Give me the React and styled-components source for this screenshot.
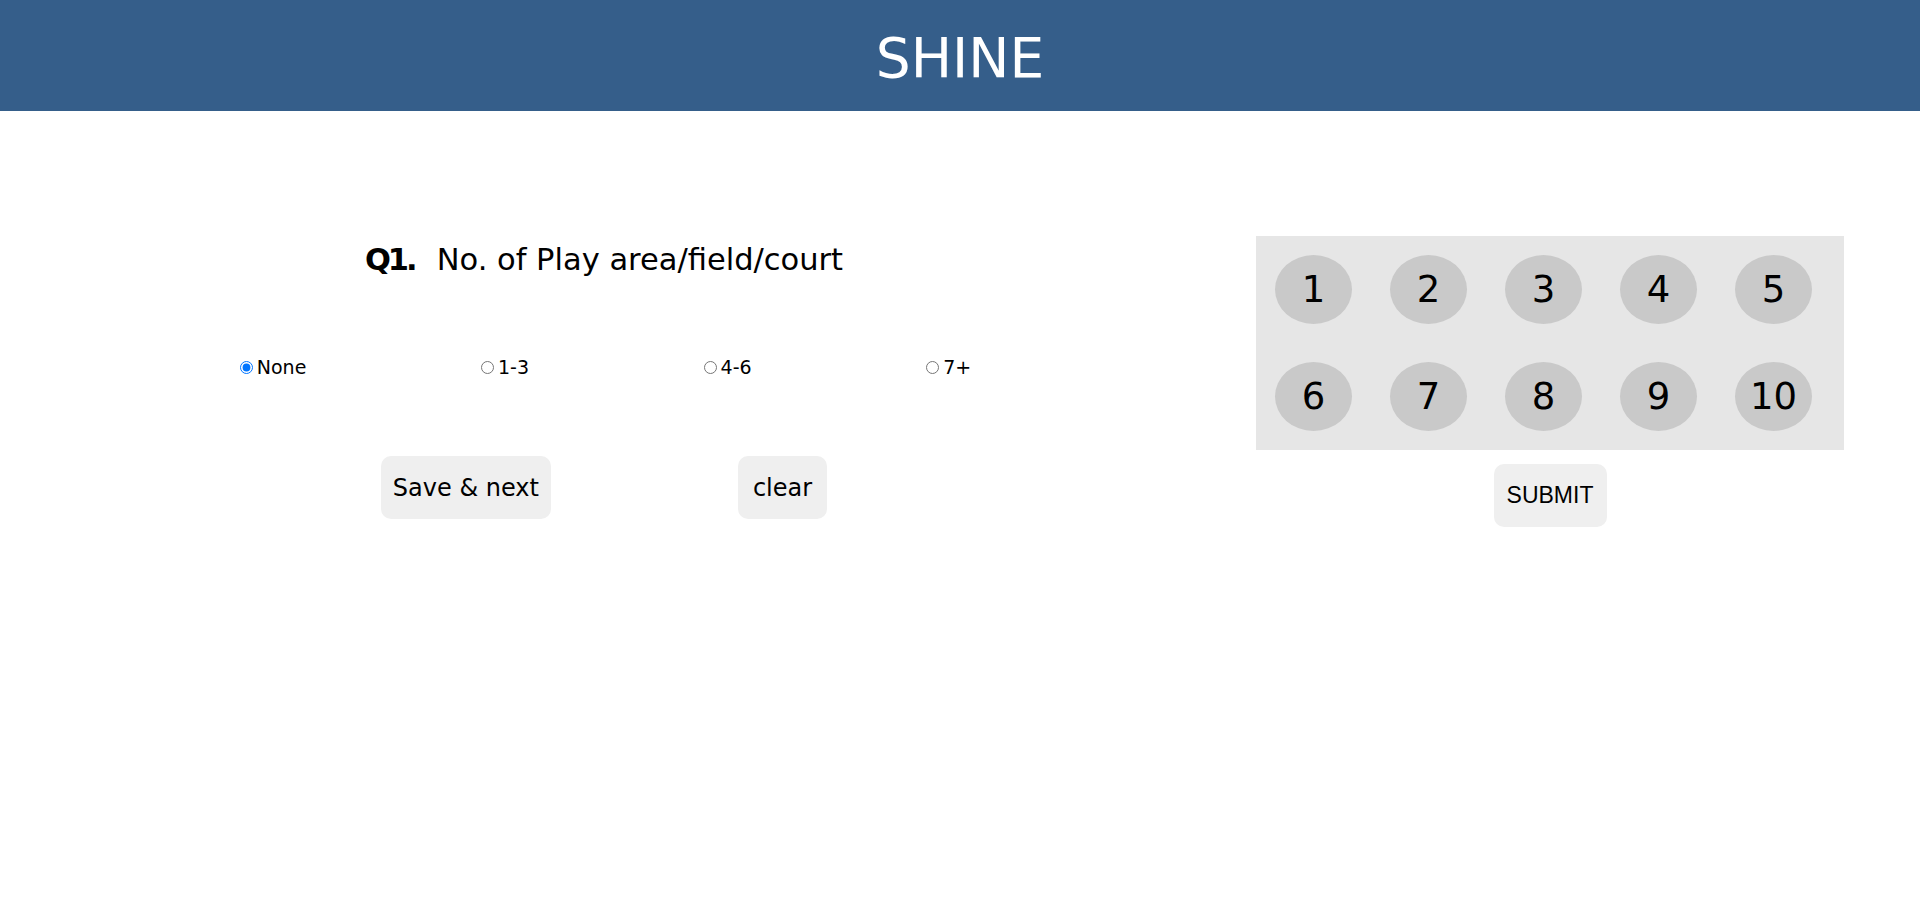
import React from 'react';
import styled, { createGlobalStyle } from 'styled-components';

const GlobalStyle = createGlobalStyle`
    body {
        margin: 0;
        font-family: "DejaVu Sans", "Noto Sans", sans-serif;
        background: #ffffff;
        color: #000000;
    }
`;

const Header = styled.header`
    height: 111px;
    background: #355e8a;
    display: flex;
    align-items: center;
    justify-content: center;

    .brand {
        color: #ffffff;
        font-size: 55px;
        font-weight: 400;
        margin: 0;
        line-height: 1;
        padding-top: 6px;
    }
`;

const Main = styled.main`
    display: grid;
    grid-template-columns: 1208px 1fr;
`;

const QuestionPanel = styled.section`
    padding-top: 131px;
    display: flex;
    flex-direction: column;
    align-items: center;
`;

const QuestionTitle = styled.h2`
    margin: 0;
    font-size: 30.5px;
    line-height: 36px;
    font-weight: 400;
    text-align: center;

    .num {
        font-weight: 700;
        letter-spacing: -3px;
        margin-right: 22px;
    }
`;

const Options = styled.div`
    width: 906px;
    margin-top: 78px;
    display: flex;
    justify-content: space-around;
    align-items: center;
    font-size: 19px;
`;

const Option = styled.label`
    display: flex;
    align-items: center;

    input {
        margin: 0 4px 0 3px;
        width: 13px;
        height: 13px;
    }
`;

const Actions = styled.div`
    margin-top: 78px;
    display: flex;
    justify-content: center;
    gap: 187px;
`;

const ActionButton = styled.button`
    height: 63px;
    padding: 0 ${props => props.$pad || 12}px;
    border: none;
    border-radius: 10px;
    background: #efefef;
    color: #000;
    font-family: "DejaVu Sans", sans-serif;
    font-size: 24px;
    cursor: pointer;
`;

const NavPanel = styled.aside`
    padding-top: 125px;
    padding-left: 48px;
    display: flex;
    flex-direction: column;
    align-items: flex-start;
`;

const NavColumn = styled.div`
    width: 588px;
    display: flex;
    flex-direction: column;
    align-items: center;
`;

const Grid = styled.div`
    width: 588px;
    background: #e6e6e6;
    display: flex;
    flex-wrap: wrap;
`;

const NumberBubble = styled.button`
    width: 77px;
    height: 69px;
    margin: 19px;
    border: none;
    border-radius: 50%;
    background: #c9c9c9;
    color: #000;
    font-family: "DejaVu Sans", sans-serif;
    font-size: 37px;
    padding: 0;
    display: flex;
    align-items: center;
    justify-content: center;
    cursor: pointer;
`;

const SubmitButton = styled.button`
    margin-top: 14px;
    width: 113px;
    height: 63px;
    border: none;
    border-radius: 10px;
    background: #efefef;
    color: #000;
    font-family: "Liberation Sans", Arial, sans-serif;
    font-size: 23px;
    cursor: pointer;
`;

const options = ["None", "1-3", "4-6", "7+"];

const App = () => {
    return (
        <>
            <GlobalStyle />
            <Header>
                <h1 className="brand">SHINE</h1>
            </Header>
            <Main>
                <QuestionPanel>
                    <QuestionTitle>
                        <span className="num">Q1.</span>No. of Play area/field/court
                    </QuestionTitle>
                    <Options>
                        {options.map((opt, i) => (
                            <Option key={opt}>
                                <input type="radio" name="q1" defaultChecked={i === 0} />
                                {opt}
                            </Option>
                        ))}
                    </Options>
                    <Actions>
                        <ActionButton>Save &amp; next</ActionButton>
                        <ActionButton $pad={15}>clear</ActionButton>
                    </Actions>
                </QuestionPanel>
                <NavPanel>
                    <NavColumn>
                        <Grid>
                            {Array.from({ length: 10 }, (_, i) => (
                                <NumberBubble key={i}>{i + 1}</NumberBubble>
                            ))}
                        </Grid>
                        <SubmitButton>SUBMIT</SubmitButton>
                    </NavColumn>
                </NavPanel>
            </Main>
        </>
    );
};

export default App;
